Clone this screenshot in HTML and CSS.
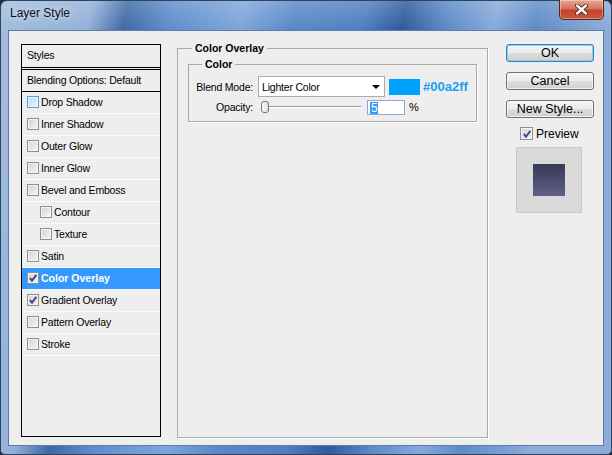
FILE: index.html
```html
<!DOCTYPE html>
<html lang="en">
<head>
    <meta charset="UTF-8">
    <title>Layer Style</title>
    <link rel="stylesheet" href="styles.css">
</head>
<body>
    <div class="window">
        <div class="titlebar">
            <span class="title">Layer Style</span>
            <div class="close">
                <svg width="13" height="11" viewBox="0 0 13 11">
                    <path d="M2 1.5 L11 9.5 M11 1.5 L2 9.5" stroke="#3a1510" stroke-width="4" stroke-linecap="round"/>
                    <path d="M2 1.5 L11 9.5 M11 1.5 L2 9.5" stroke="#fff" stroke-width="2.4" stroke-linecap="round"/>
                </svg>
            </div>
        </div>

        <div class="client">
            <!-- effects list -->
            <div class="styles-list">
                <div class="list-head">Styles</div>
                <div class="list-blend">Blending Options: Default</div>
                <div class="row"><span class="cb hover"></span>Drop Shadow</div>
                <div class="row"><span class="cb"></span>Inner Shadow</div>
                <div class="row"><span class="cb"></span>Outer Glow</div>
                <div class="row"><span class="cb"></span>Inner Glow</div>
                <div class="row"><span class="cb"></span>Bevel and Emboss</div>
                <div class="row sub"><span class="cb"></span>Contour</div>
                <div class="row sub"><span class="cb"></span>Texture</div>
                <div class="row"><span class="cb"></span>Satin</div>
                <div class="row selected"><span class="cb checked"></span>Color Overlay</div>
                <div class="row"><span class="cb checked"></span>Gradient Overlay</div>
                <div class="row"><span class="cb"></span>Pattern Overlay</div>
                <div class="row"><span class="cb"></span>Stroke</div>
            </div>

            <!-- settings for the selected effect -->
            <fieldset class="group main-group">
                <legend>Color Overlay</legend>
                <fieldset class="group sub-group">
                    <legend>Color</legend>
                    <div class="field">
                        <label class="field-label">Blend Mode:</label>
                        <div class="select">
                            <span>Lighter Color</span>
                            <span class="arrow"></span>
                        </div>
                        <span class="swatch"></span>
                        <span class="hex">#00a2ff</span>
                    </div>
                    <div class="field opacity">
                        <label class="field-label">Opacity:</label>
                        <div class="slider">
                            <span class="thumb"></span>
                            <span class="track"></span>
                        </div>
                        <div class="num"><span class="sel">5</span></div>
                        <span class="pct">%</span>
                    </div>
                </fieldset>
            </fieldset>

            <div class="side">
                <button class="btn default">OK</button>
                <button class="btn">Cancel</button>
                <button class="btn">New Style...</button>
                <div class="preview-check"><span class="cb checked"></span>Preview</div>
                <div class="preview">
                    <div class="preview-swatch"></div>
                </div>
            </div>
        </div>
    </div>
</body>
</html>
```

FILE: styles.css
```css
body {
    margin: 0;
    background: #243040;
    font-family: "Liberation Sans", Arial, sans-serif;
}

.window {
    width: 612px;
    height: 455px;
    box-sizing: border-box;
    padding: 0 7px 8px 7px;
    border: 1px solid #2d4366;
    border-radius: 7px 7px 5px 5px;
    display: flex;
    flex-direction: column;
    background:
        linear-gradient(to bottom, rgba(255, 255, 255, 0.18), rgba(255, 255, 255, 0) 28px),
        linear-gradient(100deg, #a3bddd 0, #93b1d8 90px, #3f69a6 125px, #5f8dcc 170px,
            #7ea6da 240px, #5a89c8 290px, #4f7fc0 360px, #2f5a9c 400px, #5b88c6 440px,
            #86aadb 490px, #5f8bc6 530px, #8aacd9 600px);
}

/* title bar */
.titlebar {
    height: 29px;
    display: flex;
    justify-content: space-between;
    align-items: flex-start;
}

.title {
    font-size: 12px;
    margin: 5px 0 0 2px;
    color: #0b0f16;
    text-shadow: 0 0 6px rgba(255, 255, 255, 0.9);
}

.close {
    width: 45px;
    height: 20px;
    box-sizing: border-box;
    margin-top: -1px;
    border: 1px solid #5b2219;
    border-top: none;
    border-radius: 0 0 5px 5px;
    background: linear-gradient(to bottom, #e9a894 0, #d7735d 45%, #c2432b 55%, #c9573d 100%);
    box-shadow: inset 0 0 0 1px rgba(255, 255, 255, 0.35);
    display: flex;
    align-items: center;
    justify-content: center;
}

/* dialog body */
.client {
    flex: 1;
    display: flex;
    align-items: flex-start;
    padding: 13px 0 0 12px;
    background: #eeeeee;
    border: 1px solid #5f7ba3;
    font-size: 10.5px;
    letter-spacing: -0.2px;
    color: #000;
}

/* left list */
.styles-list {
    width: 138px;
    height: 391px;
    border: 1px solid #000;
    flex-shrink: 0;
}

.list-head {
    height: 22px;
    line-height: 21px;
    padding-left: 5px;
    border-bottom: 3px double #000;
}

.list-blend {
    height: 21px;
    line-height: 20px;
    padding-left: 5px;
    border-bottom: 1px solid #000;
}

.row {
    display: flex;
    align-items: center;
    box-sizing: border-box;
    height: 22px;
    padding-left: 5px;
    padding-bottom: 1px;
    border-bottom: 1px solid #fbfbfb;
}

.row.sub {
    padding-left: 18px;
}

.row.selected {
    background: #3399ff;
    color: #fff;
    font-weight: bold;
    letter-spacing: 0;
}

.cb {
    width: 12px;
    height: 12px;
    box-sizing: border-box;
    margin-right: 2px;
    border: 1px solid #8e8f8f;
    background: linear-gradient(135deg, #d2d2d2, #f6f6f6);
    box-shadow: inset 0 0 0 1px #f4f4f4;
    flex-shrink: 0;
}

.cb.hover {
    border-color: #5a9fd4;
    background: linear-gradient(135deg, #b9dcf5, #e6f4fc);
}

.cb.checked {
    background:
        url("data:image/svg+xml,%3Csvg xmlns='http://www.w3.org/2000/svg' width='10' height='10'%3E%3Cpath d='M1.8 5 L4 7.6 L8.4 1.8' fill='none' stroke='%23404e8c' stroke-width='2'/%3E%3C/svg%3E") center no-repeat,
        linear-gradient(135deg, #d2d2d2, #f6f6f6);
}

/* group boxes */
.group {
    margin: 0;
    border: 1px solid #a9a9a9;
    box-shadow: 1px 1px 0 #fff;
}

.group legend {
    font-weight: bold;
    letter-spacing: 0;
    line-height: 13px;
    padding: 0 3px;
}

.main-group {
    width: 311px;
    height: 396px;
    box-sizing: border-box;
    margin: -2px 0 0 16px;
    padding: 3px 10px 0 10px;
}

.main-group > legend {
    margin-left: 4px;
}

.sub-group {
    padding: 5px 0 6px 0;
}

.sub-group > legend {
    margin-left: 13px;
}

.field {
    display: flex;
    align-items: center;
    height: 21px;
}

.field-label {
    width: 64px;
    text-align: right;
    margin-right: 5px;
    flex-shrink: 0;
}

.select {
    width: 127px;
    height: 21px;
    box-sizing: border-box;
    border: 1px solid #acacac;
    background: #fff;
    display: flex;
    align-items: center;
    justify-content: space-between;
    padding: 0 4px 0 3px;
}

.arrow {
    width: 0;
    height: 0;
    border-left: 4px solid transparent;
    border-right: 4px solid transparent;
    border-top: 4px solid #000;
}

.swatch {
    width: 31px;
    height: 16px;
    margin-left: 4px;
    background: #00a2ff;
}

.hex {
    margin-left: 3px;
    font-size: 13px;
    font-weight: bold;
    letter-spacing: 0;
    color: #1ca0f2;
}

.field.opacity {
    height: 16px;
    margin-top: 2px;
}

.slider {
    width: 100px;
    display: flex;
    align-items: center;
    margin-left: 3px;
}

.thumb {
    width: 8px;
    height: 12px;
    box-sizing: border-box;
    border: 1px solid #767676;
    border-radius: 3px;
    background: linear-gradient(to right, #fafafa, #dedede);
}

.track {
    flex: 1;
    height: 1px;
    background: #9c9c9c;
    border-bottom: 1px solid #fff;
}

.num {
    width: 38px;
    height: 15px;
    box-sizing: border-box;
    margin-left: 6px;
    border: 1px solid #8aa9d6;
    background: #fff;
    padding: 1px 0 0 2px;
    font-size: 12px;
    line-height: 12px;
}

.sel {
    display: inline-block;
    background: #3399ff;
    color: #fff;
    padding: 0 1px;
}

.pct {
    margin-left: 4px;
    font-size: 11px;
}

/* right column */
.side {
    width: 88px;
    margin-left: 18px;
    display: flex;
    flex-direction: column;
}

.btn {
    height: 18px;
    margin: 0 0 10px 0;
    padding: 0;
    font-family: "Liberation Sans", Arial, sans-serif;
    font-size: 12.5px;
    letter-spacing: 0;
    color: #000;
    border: 1px solid #707070;
    border-radius: 3px;
    background: linear-gradient(to bottom, #f3f3f3 0, #ebebeb 50%, #dddddd 50%, #d0d0d0 100%);
    box-shadow: inset 0 0 0 1px rgba(255, 255, 255, 0.7);
}

.btn.default {
    border-color: #3c7fb1;
    box-shadow: inset 0 0 0 1px #7fd3f6;
}

.preview-check {
    display: flex;
    align-items: center;
    margin: -1px 0 0 14px;
    height: 13px;
    font-size: 12px;
    letter-spacing: 0;
}

.preview-check .cb {
    width: 13px;
    height: 13px;
    margin-right: 3px;
}

.preview {
    width: 66px;
    height: 66px;
    box-sizing: border-box;
    margin: 7px 0 0 10px;
    background: #dadada;
    border: 1px solid #c9c9c9;
    display: flex;
    align-items: center;
    justify-content: center;
}

.preview-swatch {
    width: 32px;
    height: 32px;
    background: linear-gradient(to bottom, #383955, #5e6088);
}
```
